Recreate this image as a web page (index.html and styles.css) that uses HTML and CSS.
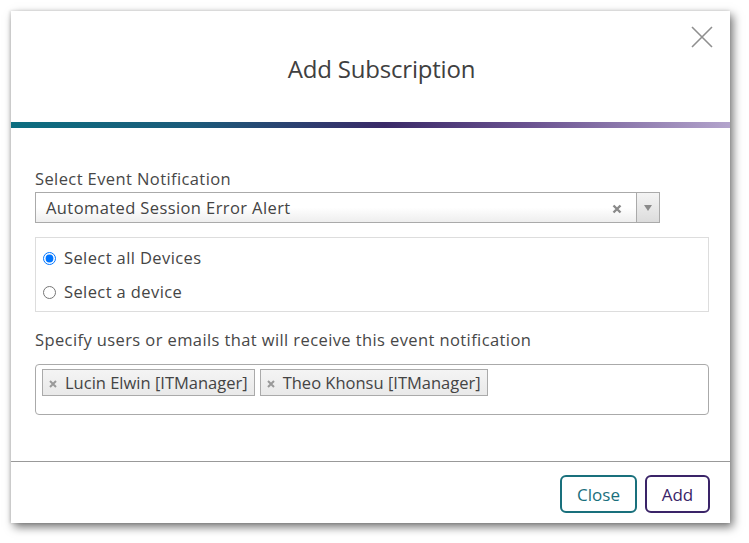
FILE: index.html
```html
<!DOCTYPE html>
<html>
<head>
<meta charset="utf-8">
<link rel="stylesheet" href="styles.css">
</head>
<body>
<div class="modal">
  <div class="header">
    <h1 class="title">Add Subscription</h1>
    <button class="close-x" aria-label="Close">
      <svg width="22" height="22" viewBox="0 0 22 22"><path d="M1 1L21 21M21 1L1 21" stroke="#8f8f8f" stroke-width="1.6" fill="none"/></svg>
    </button>
  </div>
  <div class="bar"></div>
  <div class="body">
    <label class="label">Select Event Notification</label>
    <div class="select">
      <span class="select-text">Automated Session Error Alert</span>
      <span class="select-clear">
        <svg width="10" height="10" viewBox="0 0 10 10"><path d="M1.5 1.5L8.5 8.5M8.5 1.5L1.5 8.5" stroke="#8a8a8a" stroke-width="2.4" fill="none"/></svg>
      </span>
      <span class="select-arrow">
        <svg width="8" height="6" viewBox="0 0 8 6"><path d="M0 0H8L4 6Z" fill="#8a8a8a"/></svg>
      </span>
    </div>
    <div class="radios">
      <label class="radio-row"><input type="radio" name="dev" checked> <span>Select all Devices</span></label>
      <label class="radio-row"><input type="radio" name="dev"> <span>Select a device</span></label>
    </div>
    <label class="label label2">Specify users or emails that will receive this event notification</label>
    <div class="tags">
      <span class="tag"><svg class="tag-x" width="8" height="8" viewBox="0 0 8 8"><path d="M1 1L7 7M7 1L1 7" stroke="#999" stroke-width="2" fill="none"/></svg>Lucin Elwin [ITManager]</span>
      <span class="tag"><svg class="tag-x" width="8" height="8" viewBox="0 0 8 8"><path d="M1 1L7 7M7 1L1 7" stroke="#999" stroke-width="2" fill="none"/></svg>Theo Khonsu [ITManager]</span>
    </div>
  </div>
  <div class="footer">
    <button class="btn btn-close">Close</button>
    <button class="btn btn-add">Add</button>
  </div>
</div>
</body>
</html>
```
FILE: styles.css
```css
* { box-sizing: border-box; }
html, body { margin: 0; padding: 0; background: #fff; }
body {
  font-family: "Open Sans", Lato, sans-serif;
  color: #454545;
  padding: 11px 0 0 11px;
  width: 749px;
  height: 543px;
  overflow: hidden;
}
.modal {
  width: 719px;
  height: 512px;
  background: #fff;
  box-shadow: 3px 4px 9px rgba(0,0,0,0.55), -1px 0 3px rgba(0,0,0,0.15);
  display: flex;
  flex-direction: column;
}
.header {
  height: 111px;
  display: flex;
  align-items: center;
  justify-content: center;
  position: relative;
}
.title {
  margin: 0;
  padding-top: 4px;
  padding-left: 22px;
  font-size: 24px;
  font-weight: 400;
  color: #404040;
  letter-spacing: -0.2px;
}
.close-x {
  position: absolute;
  right: 17px;
  top: 15px;
  border: 0;
  background: none;
  padding: 0;
  width: 22px;
  height: 22px;
}
.close-x svg { display: block; }
.bar {
  height: 6px;
  background: linear-gradient(90deg, #0c6e80 0%, #1b5b7a 25%, #3a2a68 52%, #6a5290 72%, #b3a4cc 100%);
}
.body {
  padding: 41px 20px 0 24px;
  flex: 1;
  display: flex;
  flex-direction: column;
}
.label {
  font-size: 16.5px;
  line-height: 20px;
  color: #474747;
  letter-spacing: 0.4px;
}
.select {
  margin-top: 3px;
  width: 625px;
  height: 31px;
  border: 1px solid #aaa;
  background: linear-gradient(#fff 0%, #fff 50%, #eee 100%);
  display: flex;
  align-items: center;
}
.select-text {
  flex: 1;
  padding-left: 10px;
  font-size: 16.5px;
  color: #444;
  letter-spacing: 0.4px;
}
.select-clear { width: 24px; display: flex; align-items: center; padding-top: 3px; }
.select-arrow {
  width: 23px;
  height: 100%;
  border-left: 1px solid #aaa;
  background: linear-gradient(#f4f4f4, #dcdcdc);
  display: flex;
  align-items: center;
  justify-content: center;
}
.radios {
  margin-top: 14px;
  width: 674px;
  height: 75px;
  border: 1px solid #ddd;
  padding: 8px 0 0 7px;
  display: flex;
  flex-direction: column;
  gap: 10px;
}
.radio-row {
  display: flex;
  align-items: center;
  font-size: 16.5px;
  line-height: 24px;
  color: #454545;
  letter-spacing: 0.4px;
}
.radio-row input {
  margin: 0 8px 0 0;
  width: 13px;
  height: 13px;
}
.label2 { margin-top: 18px; }
.tags {
  margin-top: 14px;
  width: 674px;
  height: 51px;
  border: 1px solid #aaa;
  border-radius: 4px;
  padding: 4px 6px;
  display: flex;
  align-items: flex-start;
  gap: 5px;
}
.tag {
  height: 27px;
  border: 1px solid #aaa;
  background: linear-gradient(#f4f4f4, #e9e9e9);
  padding: 0 6px 0 6px;
  display: flex;
  align-items: center;
  font-size: 16.5px;
  color: #444;
  letter-spacing: 0;
}
.tag-x {
  margin-right: 8px;
  margin-top: 2px;
}
.footer {
  height: 62px;
  border-top: 1px solid #999;
  display: flex;
  justify-content: flex-end;
  align-items: flex-start;
  gap: 8px;
  padding: 13px 20px 0 0;
}
.btn {
  height: 38px;
  background: #fff;
  border-radius: 6px;
  font-family: "Open Sans", Lato, sans-serif;
  font-size: 17px;
  padding: 0;
  cursor: pointer;
}
.btn-close {
  width: 77px;
  border: 2px solid #19707c;
  color: #19707c;
}
.btn-add {
  width: 65px;
  border: 2px solid #3a2468;
  color: #3a2468;
}
```
